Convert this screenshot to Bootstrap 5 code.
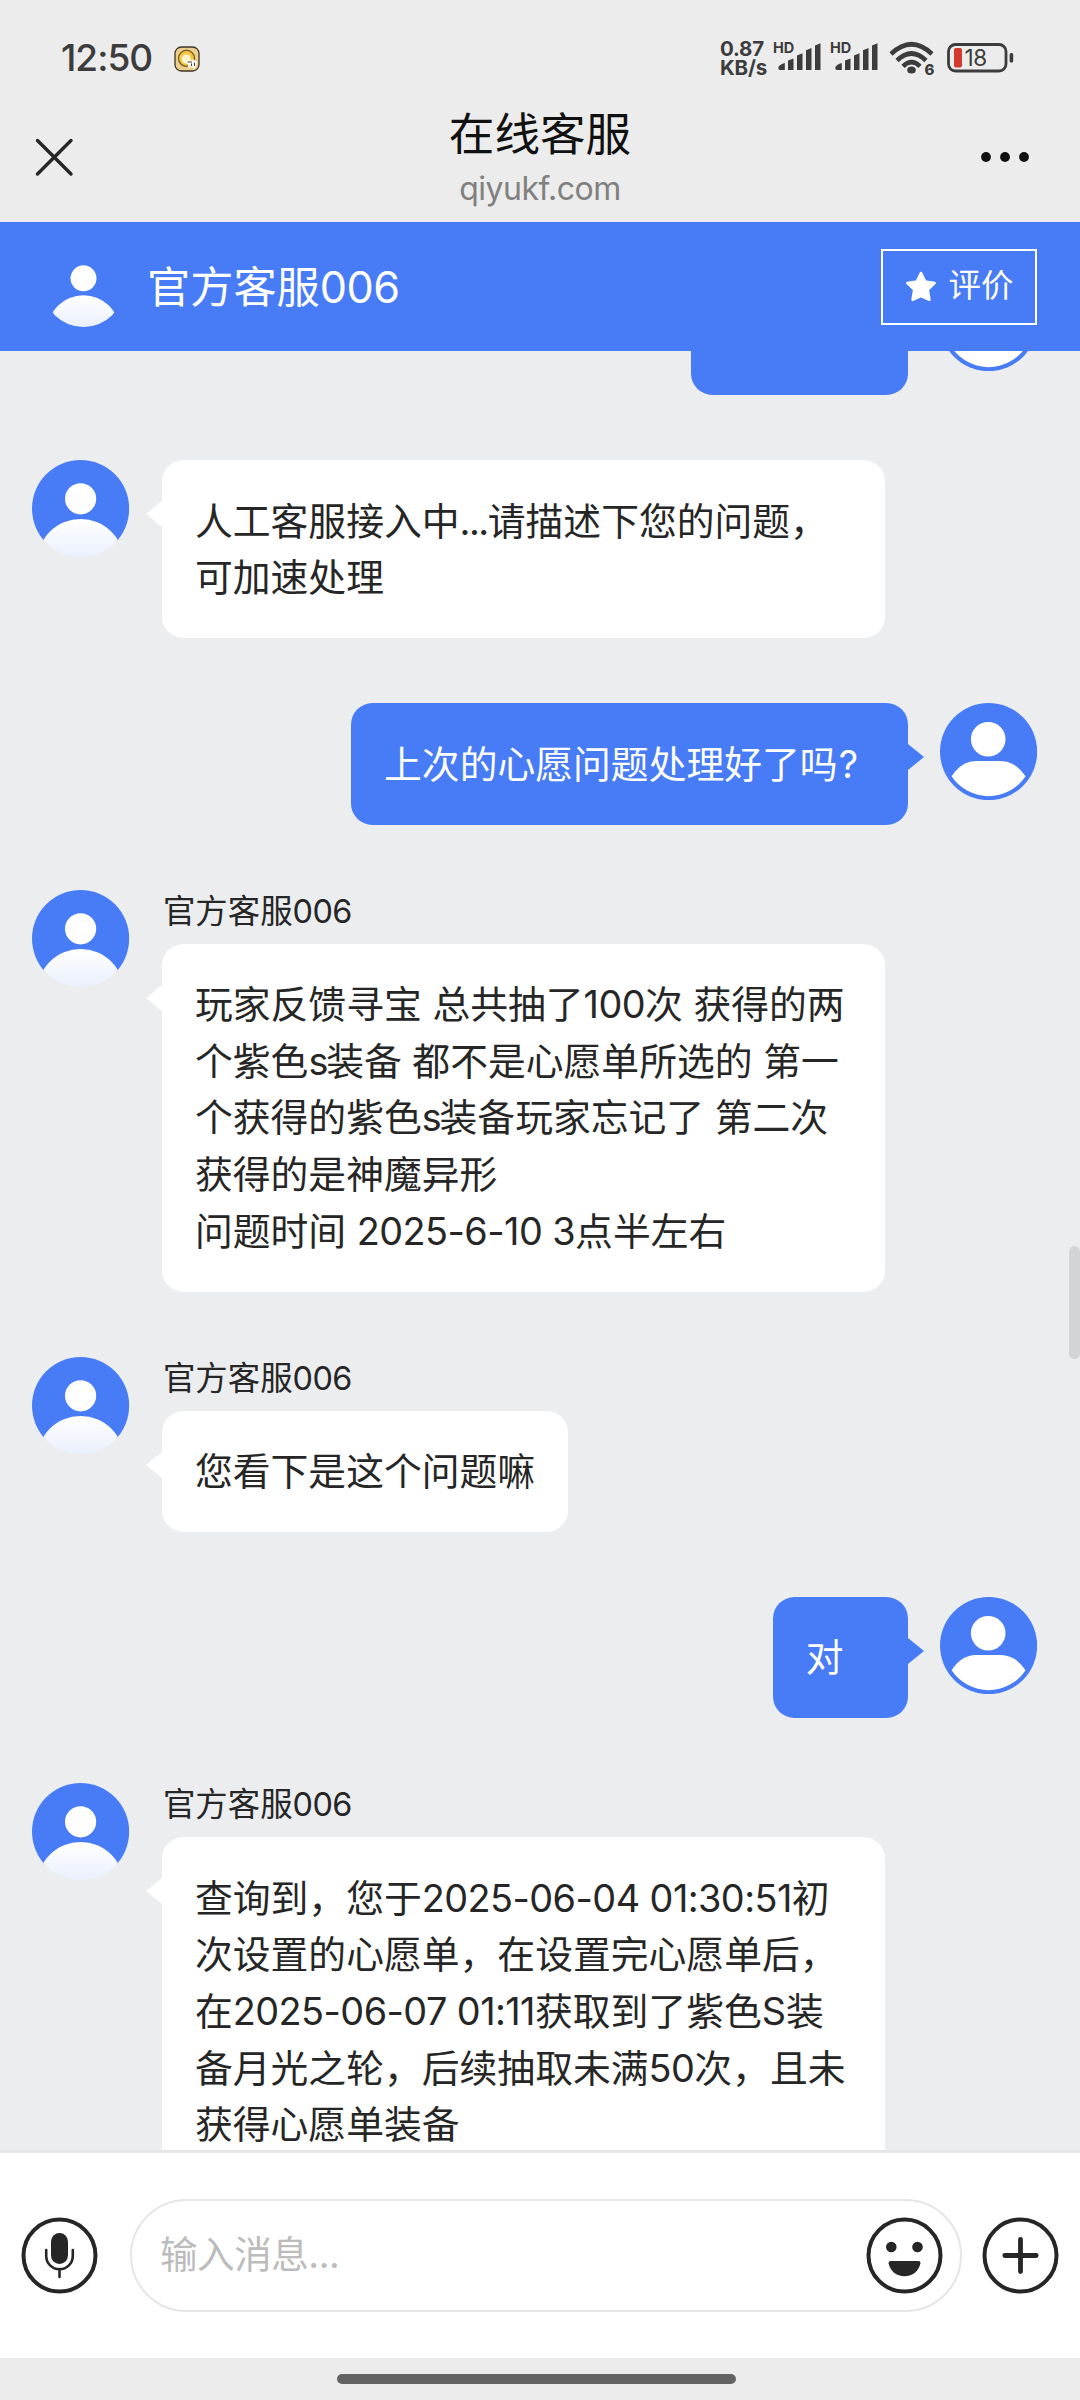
<!DOCTYPE html>
<html lang="zh-CN">
<head>
<meta charset="utf-8">
<meta name="viewport" content="width=device-width, initial-scale=1">
<title>在线客服</title>
<link href="https://cdn.jsdelivr.net/npm/bootstrap@5.3.0/dist/css/bootstrap.min.css" rel="stylesheet">
<style>
  :root { --brand: #477cf6; --page: #ebedef; --chrome: #ececec; }
  body { width: 1080px; height: 2400px; overflow: hidden; background: var(--chrome); color: #262626;
         font-family: Inter, "Noto Sans CJK SC", sans-serif; }
  svg { display: block; flex: none; }

  .statusbar { height: 76px; padding: 39px 66px 0 61px; color: #3c3c3c; }
  .clock { font-size: 37px; line-height: 38px; font-weight: 500; width: 113px; letter-spacing: -1px; }
  .netspeed { width: 53px; font-size: 20.5px; line-height: 19px; font-weight: 700; letter-spacing: -.2px; }
  .status-icon { margin-top: 2px; }

  .titlebar { height: 146px; padding: 0 49px 0 34px; }
  .titlebar h1 { font-size: 45.6px; line-height: 60px; color: #111; font-weight: 400; margin: 29px 0 0; }
  .titlebar p { font-size: 32px; line-height: 40px; color: #808080; margin: 4px 0 0; letter-spacing: -.5px; }

  .agentbar { height: 129px; background: var(--brand); color: #fff; padding: 0 43px; z-index: 1; }
  .agent-title { font-size: 43.2px; margin-left: 23px; line-height: 60px; }
  .rate-btn { --bs-btn-color: #fff; --bs-btn-border-color: #fff; --bs-btn-border-width: 2px; --bs-btn-border-radius: 0;
              width: 156px; height: 76px; font-size: 32.4px; padding: 0; }

  .chat { background: var(--page); }
  .thread { margin-top: -77px; padding: 0 42.6px 0 32.4px; gap: 64.8px; }
  .face { width: 97.2px; height: 97.2px; }
  .msg { gap: 32.4px; }
  .sender { font-size: 32.4px; line-height: 43px; height: 54px; padding-left: 1px; }
  .bubble { position: relative; padding: 32.4px 32.4px 32.4px 33px; border-radius: 21.6px; font-size: 37.8px; line-height: 56.7px;
            white-space: nowrap; background: #fff; }
  .bubble.wide { width: 723px; }
  .bubble::before { content: ""; position: absolute; left: -16px; top: 41px; border: solid transparent;
                    border-width: 13.5px 16.5px 13.5px 0; border-right-color: #fff; }
  .mine .bubble { background: var(--brand); color: #fff; min-width: 135px; }
  .mine .bubble::before { left: auto; right: -16px; border-width: 13.5px 0 13.5px 16.5px; border-left-color: var(--brand); border-right-color: transparent; }
  .num { letter-spacing: -.55px; }
  .latin { letter-spacing: -2.2px; }
  .dots { letter-spacing: -1.5px; }
  .qm { display: inline-block; width: 37.8px; padding-left: 1px; }
  .scroll-thumb { position: absolute; right: 0; top: 895px; width: 11px; height: 113px; border-radius: 6px; background: #d3d4d5; }

  .composer { height: 208px; background: #fff; border-top: 3px solid #e6e6e6; padding: 0 21px; gap: 20px; }
  .composer .field { height: 113px; border: 2px solid #e6e6e6; border-radius: 57px; padding: 0 17px 0 28px; margin-left: 12px; }
  .composer input, .composer input:focus { font-size: 37.6px; border: 0; padding: 0; background: none; box-shadow: none; letter-spacing: -.5px; }
  .composer input::placeholder { color: #bcbcbc; }
  .navstrip { height: 42px; padding: 16px 7px 0 0; }
  .navstrip div { width: 399px; height: 10px; border-radius: 5px; background: #636363; }
</style>
</head>
<body class="d-flex flex-column m-0">

<svg width="0" height="0" class="position-absolute" aria-hidden="true">
  <defs>
    <linearGradient id="fade" x1="0" y1="0" x2="0" y2="1">
      <stop offset="0" stop-color="#fff"/><stop offset=".45" stop-color="#e9effd"/>
    </linearGradient>
    <clipPath id="round"><circle cx="48.6" cy="48.6" r="48.6"/></clipPath>
    <symbol id="agent" viewBox="0 0 97.2 97.2">
      <g clip-path="url(#round)">
        <rect width="97.2" height="81.5" fill="#477cf6"/>
        <circle cx="48.6" cy="38.8" r="15.6" fill="#fff"/>
        <circle cx="48.6" cy="102.6" r="43.6" fill="url(#fade)"/>
      </g>
    </symbol>
    <symbol id="user" viewBox="0 0 97.2 97.2">
      <circle cx="48.6" cy="48.6" r="48.6" fill="#477cf6"/>
      <circle cx="48.2" cy="36.2" r="17.3" fill="#fff"/>
      <path d="M11.6 73.3Q21.5 58 36 58H60.5Q75.5 58 85.6 73.3A44.4 44.4 0 0 1 11.6 73.3Z" fill="#fff"/>
    </symbol>
    <symbol id="signal" viewBox="0 0 48 30">
      <text x="0" y="11.6" font-family="Inter" font-size="14.5" font-weight="700" fill="#3c3c3c">HD</text>
      <path d="M5.3 27Q5.3 24 11.8 22V29H7Q5.3 29 5.3 27ZM15 19.5L20.5 17.5V29H15ZM24 14.5L29.5 12.3V29H24ZM33 9.2L38.5 7V29H33ZM42 4.5L47.5 2.3V29H42Z" fill="#3c3c3c"/>
    </symbol>
  </defs>
</svg>

<header class="statusbar d-flex align-items-start flex-shrink-0">
  <span class="clock">12:50</span>
  <svg width="26" height="26" viewBox="0 0 26 26" style="margin-top:7px">
    <rect x="1" y="1" width="24" height="24" rx="6.5" fill="#eccf8c" stroke="#3d3527" stroke-width="1.3"/>
    <circle cx="12.5" cy="12.3" r="8" fill="#f6c845" stroke="#7d6225" stroke-width="1.4"/>
    <circle cx="12.3" cy="13" r="4.6" fill="#fff6c9"/>
    <path d="M13 16H21M15.5 16V20M19 15V20.5M21.5 17L20 21" stroke="#fff" stroke-width="3" stroke-linecap="round"/>
    <path d="M13.5 16H18M17.5 17.5V20M20.5 16.5V20" stroke="#4b4031" stroke-width="1.1"/>
  </svg>
  <div class="netspeed ms-auto">0.87<br>KB/s</div>
  <svg class="status-icon" width="48" height="30"><use href="#signal"/></svg>
  <svg class="status-icon" width="48" height="30" style="margin-left:9px"><use href="#signal"/></svg>
  <svg width="48" height="40" viewBox="0 0 48 40" style="margin:2px 0 0 11px">
    <g fill="none" stroke="#3c3c3c" stroke-width="4.6">
      <path d="M2 13Q22.5-6.5 43 13"/><path d="M8 19.5Q22.5 5.5 37 19.5"/><path d="M14 25.3Q22.5 17 31 25.3"/>
    </g>
    <ellipse cx="22.5" cy="29" rx="4.3" ry="3.6" fill="#3c3c3c"/>
    <text x="35.5" y="34.3" font-family="Inter" font-size="15" font-weight="800" fill="#3c3c3c">6</text>
  </svg>
  <svg width="67" height="30" viewBox="0 0 67 30" style="margin:4px 0 0 10px">
    <rect x="1.5" y="1.5" width="57.5" height="26.5" rx="7" fill="none" stroke="#3c3c3c" stroke-width="2.8"/>
    <rect x="7" y="5" width="8" height="19.5" rx="2" fill="#d23a2d"/>
    <rect x="62.6" y="10" width="3.6" height="9.5" rx="1.5" fill="#3c3c3c"/>
    <text x="17.5" y="23" font-family="Inter" font-size="22.5" letter-spacing="-.5" fill="#3c3c3c">18</text>
  </svg>
</header>

<nav class="titlebar d-flex justify-content-between flex-shrink-0">
  <svg width="65" height="40" viewBox="0 0 65 40" style="margin-top:61px"><path d="M3.5 3.5L37 37M37 3.5L3.5 37" stroke="#262626" stroke-width="3.4" stroke-linecap="round"/></svg>
  <div class="text-center">
    <h1>在线客服</h1>
    <p>qiyukf.com</p>
  </div>
  <svg width="50" height="12" viewBox="0 0 50 12" style="margin-top:75px"><g fill="#111"><circle cx="5" cy="6" r="4.9"/><circle cx="24" cy="6" r="4.9"/><circle cx="43" cy="6" r="4.9"/></g></svg>
</nav>

<div class="agentbar d-flex align-items-center flex-shrink-0">
  <svg width="81" height="81"><use href="#agent"/></svg>
  <span class="agent-title">官方客服<span class="num">006</span></span>
  <button type="button" class="btn rate-btn ms-auto d-flex align-items-center justify-content-center">
    <svg width="32" height="31" viewBox="0 0 32 31" style="margin-right:12px"><path d="M16 2.2L20.2 10.6L29.6 12L22.8 18.6L24.4 28.8L16 25L7.6 28.8L9.2 18.6L2.4 12L11.8 10.6Z" fill="#fff" stroke="#fff" stroke-width="2.6" stroke-linejoin="round"/></svg>评价
  </button>
</div>

<main class="chat flex-grow-1 overflow-hidden position-relative" style="min-height:0;flex-basis:0">
  <div class="thread d-flex flex-column">
    <div class="msg mine d-flex justify-content-end">
      <div class="bubble" style="width:217px">&nbsp;</div>
      <svg class="face"><use href="#user"/></svg>
    </div>
    <div class="msg d-flex">
      <svg class="face"><use href="#agent"/></svg>
      <div class="bubble wide">人工客服接入中<span class="dots">...</span>请描述下您的问题，<br>可加速处理</div>
    </div>
    <div class="msg mine d-flex justify-content-end">
      <div class="bubble">上次的心愿问题处理好了吗<span class="qm">?</span></div>
      <svg class="face"><use href="#user"/></svg>
    </div>
    <div class="msg d-flex">
      <svg class="face"><use href="#agent"/></svg>
      <div>
        <div class="sender">官方客服<span class="num">006</span></div>
        <div class="bubble wide">玩家反馈寻宝 总共抽了<span class="num">100</span>次 获得的两<br>个紫色<span class="latin">s</span>装备 都不是心愿单所选的 第一<br>个获得的紫色<span class="latin">s</span>装备玩家忘记了 第二次<br>获得的是神魔异形<br>问题时间 <span class="num">2025-6-10 3</span>点半左右</div>
      </div>
    </div>
    <div class="msg d-flex">
      <svg class="face"><use href="#agent"/></svg>
      <div>
        <div class="sender">官方客服<span class="num">006</span></div>
        <div class="bubble">您看下是这个问题嘛</div>
      </div>
    </div>
    <div class="msg mine d-flex justify-content-end">
      <div class="bubble">对</div>
      <svg class="face"><use href="#user"/></svg>
    </div>
    <div class="msg d-flex">
      <svg class="face"><use href="#agent"/></svg>
      <div>
        <div class="sender">官方客服<span class="num">006</span></div>
        <div class="bubble wide">查询到，您于<span class="num">2025-06-04 01:30:51</span>初<br>次设置的心愿单，在设置完心愿单后，<br>在<span class="num">2025-06-07 01:11</span>获取到了紫色S装<br>备月光之轮，后续抽取未满<span class="num">50</span>次，且未<br>获得心愿单装备</div>
      </div>
    </div>
  </div>
  <div class="scroll-thumb"></div>
</main>

<footer class="composer d-flex align-items-center flex-shrink-0">
  <svg width="77" height="77" viewBox="0 0 77 77" fill="none" stroke="#262626">
    <circle cx="38.5" cy="38.5" r="36" stroke-width="4"/>
    <rect x="30" y="16" width="17" height="31" rx="8.5" fill="#262626" stroke="none"/>
    <path d="M25.2 33V39A13.3 13.3 0 0 0 51.8 39V33M38.5 52V60" stroke-width="2.6" stroke-linecap="round"/>
  </svg>
  <div class="field d-flex align-items-center flex-grow-1">
    <input type="text" class="form-control" placeholder="输入消息...">
    <svg width="77" height="77" viewBox="0 0 77 77">
      <circle cx="38.5" cy="38.5" r="36" fill="none" stroke="#262626" stroke-width="4"/>
      <circle cx="25.3" cy="30" r="5.3" fill="#262626"/><circle cx="51.5" cy="30" r="5.3" fill="#262626"/>
      <path d="M24.5 44H52.5Q54.6 44 54.4 46.2C53 54 46.5 59.2 38.5 59.2S24 54 22.6 46.2Q22.4 44 24.5 44Z" fill="#262626"/>
    </svg>
  </div>
  <svg width="77" height="77" viewBox="0 0 77 77" fill="none" stroke="#262626">
    <circle cx="38.5" cy="38.5" r="36" stroke-width="4"/>
    <path d="M38.5 22.5V54.5M22.8 38.5H54.2" stroke-width="4.8" stroke-linecap="round"/>
  </svg>
</footer>
<div class="navstrip d-flex justify-content-center flex-shrink-0"><div></div></div>

<script src="https://cdn.jsdelivr.net/npm/bootstrap@5.3.0/dist/js/bootstrap.bundle.min.js"></script>
</body>
</html>
